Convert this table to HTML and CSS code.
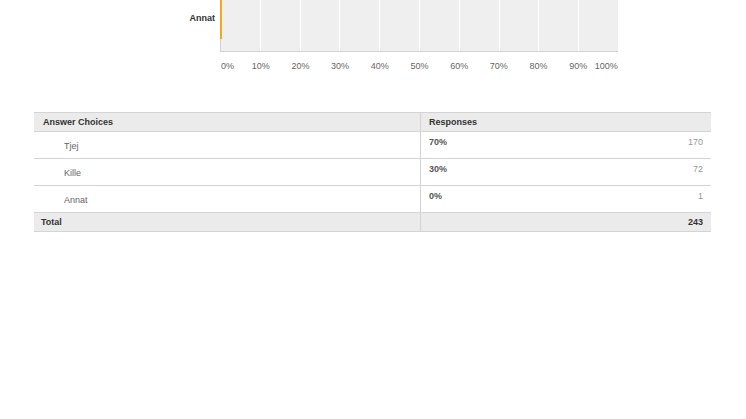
FILE: index.html
```html
<!DOCTYPE html>
<html>
<head>
<meta charset="utf-8">
<link rel="stylesheet" href="styles.css">
</head>
<body>
<div class="chart">
  <div class="row-label">Annat</div>
  <div class="plot">
    <div class="grid">
      <span></span><span></span><span></span><span></span><span></span>
      <span></span><span></span><span></span><span></span><span></span>
    </div>
    <div class="bar" style="width:0.4%"></div>
  </div>
  <div class="spacer"></div>
  <div class="ticks">
    <span class="tick first">0%</span>
    <span class="tick">10%</span>
    <span class="tick">20%</span>
    <span class="tick">30%</span>
    <span class="tick">40%</span>
    <span class="tick">50%</span>
    <span class="tick">60%</span>
    <span class="tick">70%</span>
    <span class="tick">80%</span>
    <span class="tick">90%</span>
    <span class="tick last">100%</span>
  </div>
</div>

<table class="results">
  <thead>
    <tr>
      <th class="choice">Answer Choices</th>
      <th class="resp" colspan="2">Responses</th>
    </tr>
  </thead>
  <tbody>
    <tr>
      <td class="choice">Tjej</td>
      <td class="pct">70%</td>
      <td class="count">170</td>
    </tr>
    <tr>
      <td class="choice">Kille</td>
      <td class="pct">30%</td>
      <td class="count">72</td>
    </tr>
    <tr>
      <td class="choice">Annat</td>
      <td class="pct">0%</td>
      <td class="count">1</td>
    </tr>
  </tbody>
  <tfoot>
    <tr>
      <td class="total-label">Total</td>
      <td class="total-pct"></td>
      <td class="total-count">243</td>
    </tr>
  </tfoot>
</table>
</body>
</html>
```

FILE: styles.css
```css
html, body {
  margin: 0;
  padding: 0;
  background: #ffffff;
}

body {
  font-family: "Liberation Sans", Arial, sans-serif;
  font-size: 9px;
  color: #666;
  width: 746px;
  height: 419px;
  overflow: hidden;
}

.chart {
  display: grid;
  grid-template-columns: 221px 397px;
  grid-template-rows: 52px auto;
}

.row-label {
  text-align: right;
  padding: 13px 6px 0 0;
  font-weight: bold;
  color: #333;
  line-height: 11px;
}

.plot {
  position: relative;
  background-color: #efefef;
  border-left: 1px solid #d2d2d2;
  border-bottom: 1px solid #d2d2d2;
  margin-left: -1px;
}

.grid {
  display: flex;
  height: 100%;
}

.grid span {
  flex: 1;
  border-right: 1px solid #ffffff;
}

.grid span:last-child {
  border-right: none;
}

.bar {
  position: absolute;
  left: -1px;
  top: 0;
  height: 39px;
  min-width: 2px;
  background: #f6a623;
}

.ticks {
  display: flex;
  justify-content: space-between;
  margin-top: 9px;
  line-height: 11px;
  color: #666;
}

.tick {
  width: 0;
  display: flex;
  justify-content: center;
  white-space: nowrap;
}

.tick.first {
  justify-content: flex-start;
}

.tick.last {
  justify-content: flex-end;
}

.results {
  border-collapse: collapse;
  margin: 40px 0 0 34px;
  width: 677px;
  font-size: 9px;
  line-height: 11px;
}

.results th,
.results td {
  border-bottom: 1px solid #d4d4d4;
  padding: 0;
}

.results thead th {
  background: #ebebeb;
  border-top: 1px solid #d4d4d4;
  color: #333;
  font-weight: bold;
  text-align: left;
  height: 18px;
  vertical-align: middle;
  padding: 0 8px 0 9px;
}

.results thead th.choice {
  width: 369px;
}

.results th.resp,
.results td.pct,
.results td.total-pct {
  border-left: 1px solid #d4d4d4;
}

.results th.resp {
  padding-left: 8px;
}

.results tbody td {
  height: 17px;
  vertical-align: top;
}

.results td.choice {
  padding: 9px 0 0 30px;
  color: #666;
}

.results td.pct {
  padding: 5px 0 0 8px;
  height: 21px;
  font-weight: bold;
  color: #555;
}

.results td.count {
  padding: 5px 8px 0 0;
  height: 21px;
  text-align: right;
  color: #999;
}

.results tfoot td {
  background: #ebebeb;
  font-weight: bold;
  color: #333;
  height: 18px;
  vertical-align: middle;
  padding: 0 8px;
}

.results td.total-label {
  padding-left: 7px;
}

.results td.total-count {
  text-align: right;
}
```
